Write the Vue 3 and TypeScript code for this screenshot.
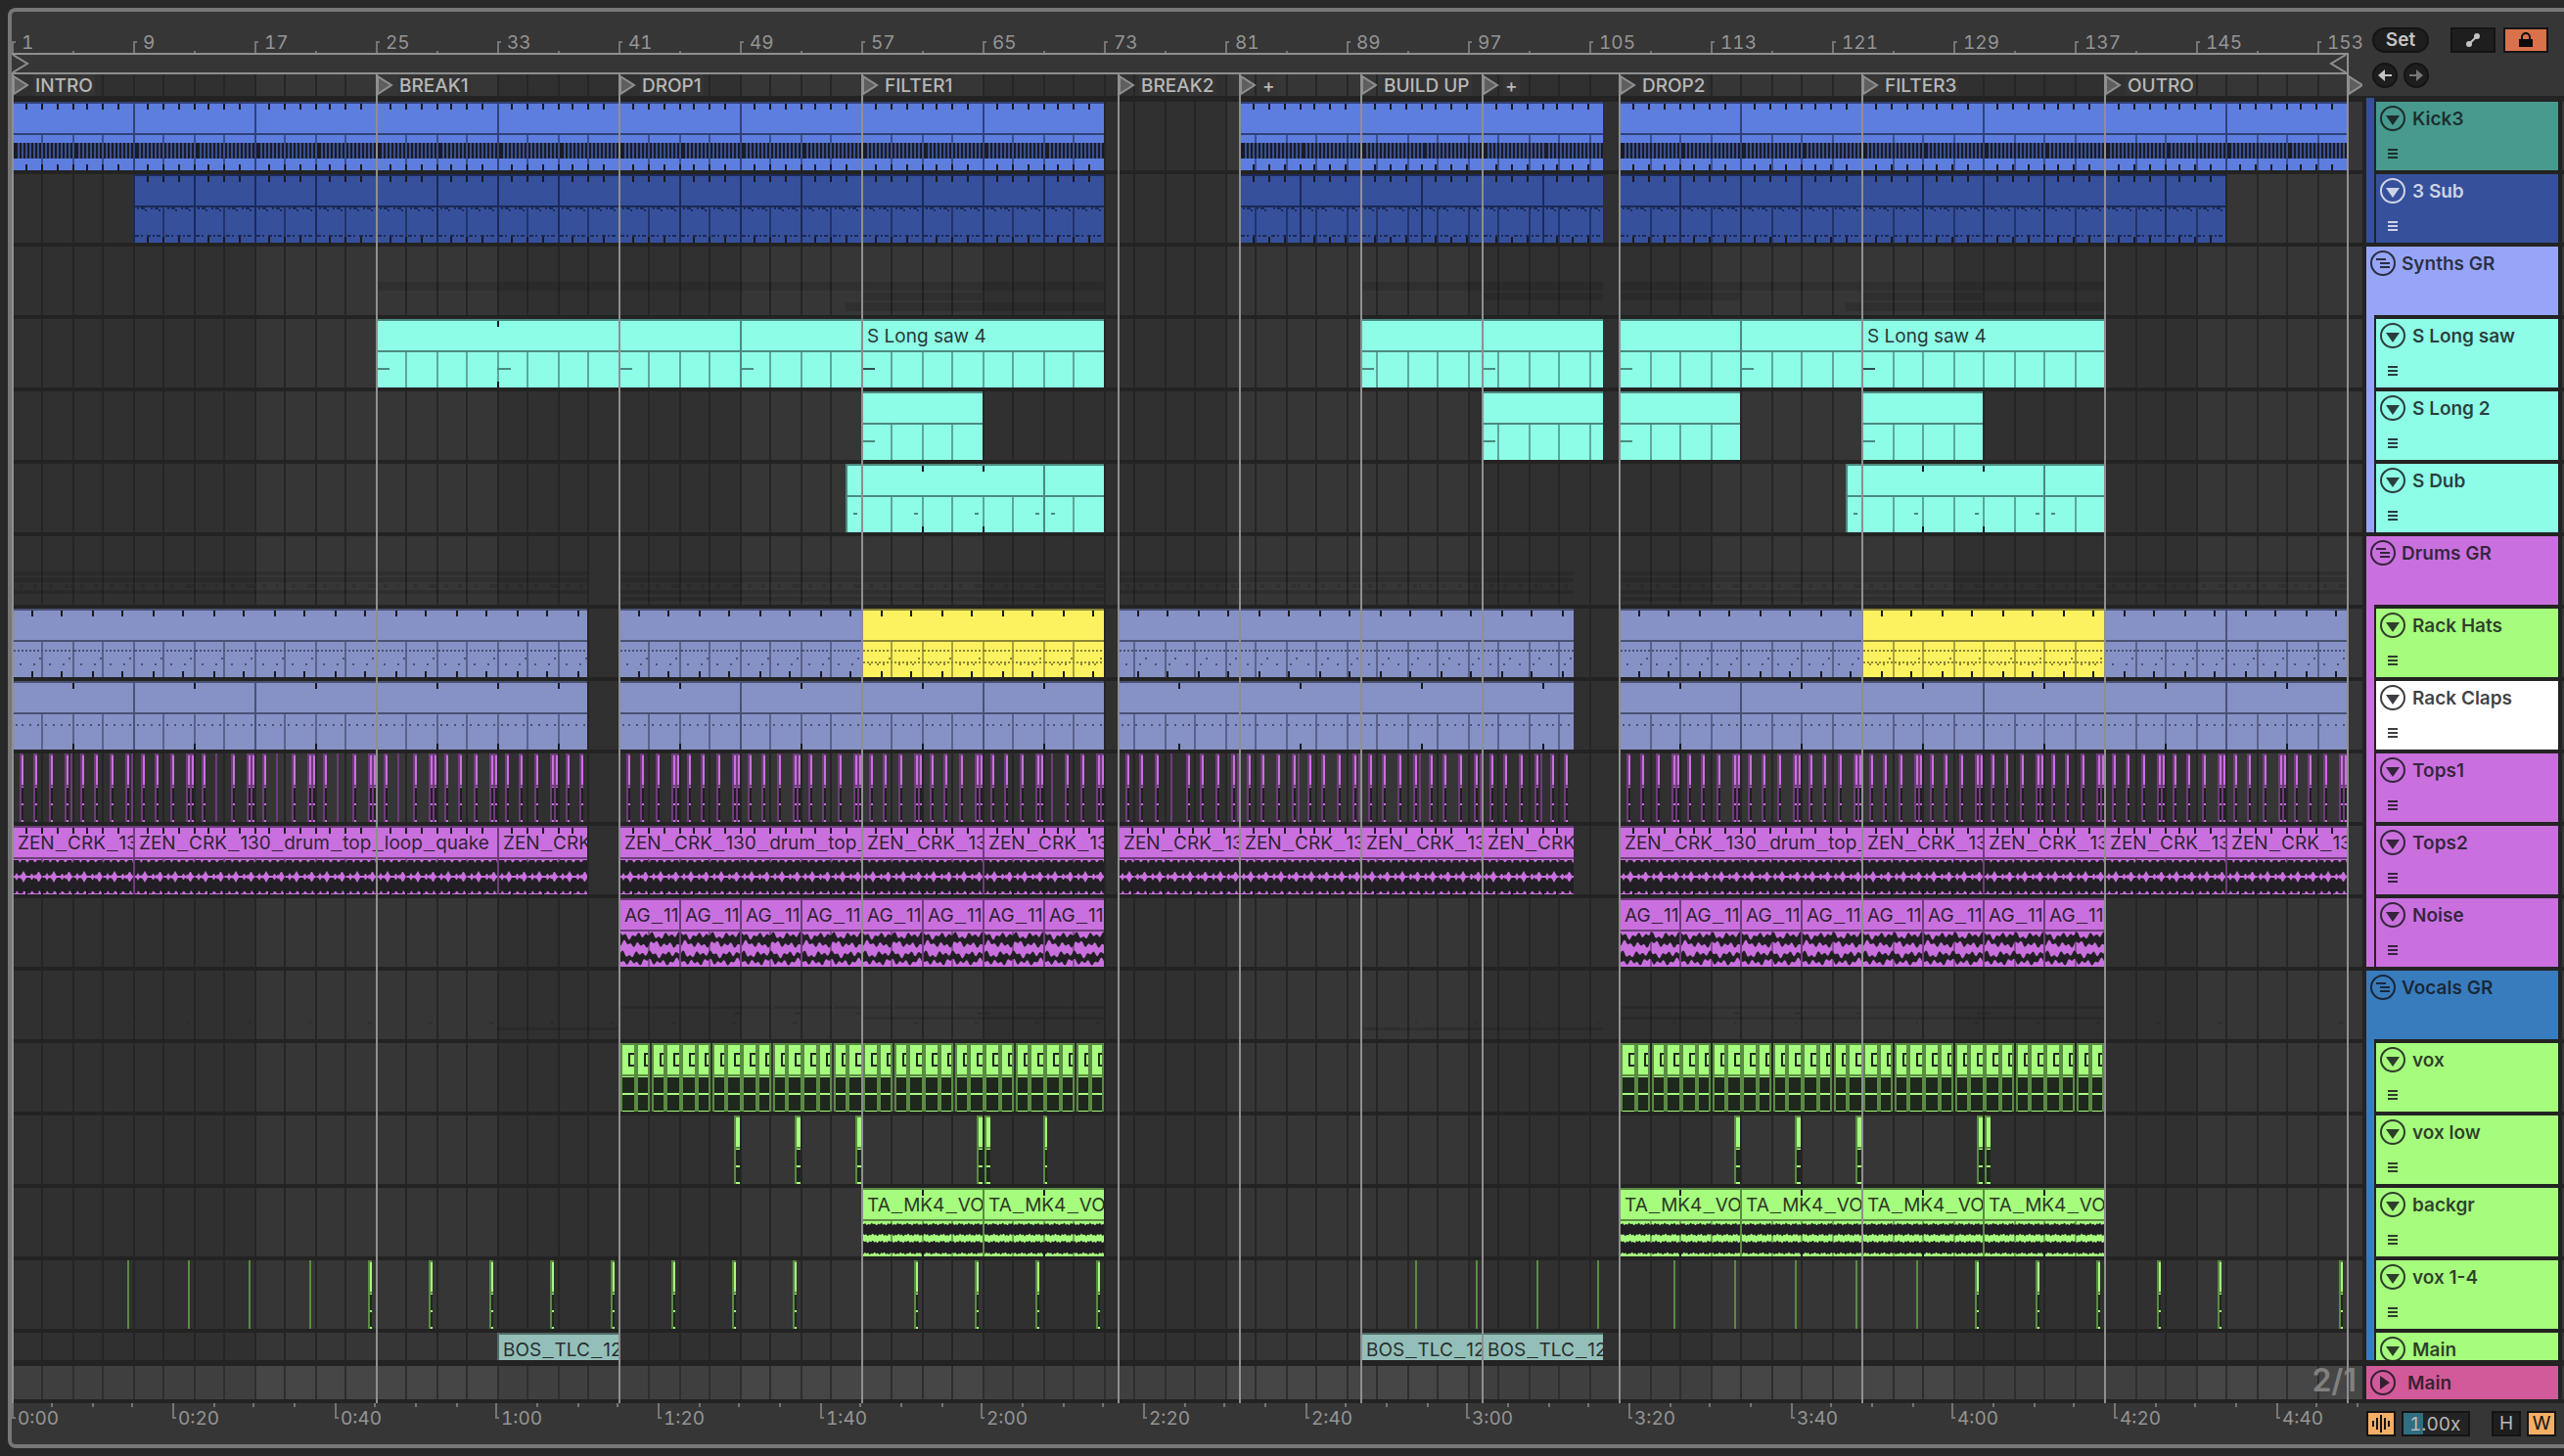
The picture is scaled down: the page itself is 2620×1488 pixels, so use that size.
<script setup lang="ts">
type ClipKind = 'kick' | 'sub' | 'pad' | 'dub' | 'hats' | 'hatsFull' | 'claps' | 'drum' | 'noise' | 'vocal' | 'title'
type Section = 'A' | 'B' | 'C'

interface Clip {
  x: number
  w: number
  fill: string
  edge: string
  label: string
  ticks: string
  grid: string
  notes: string
  wave: string
  stripe: string
  strongNote: boolean
}

interface Track {
  name: string
  color: string
  kind: 'track' | 'group'
  stripe: string
  light?: boolean
  short?: boolean
  clips: Clip[]
  ghosts: string
  sliver?: { bright: string; edge: string; wave: string; ink: string; fill: string; dark: string }
}

const BAR = 15.5
const H = 70
const origin: Record<Section, number> = { A: 0, B: 1130, C: 1642 }

const even = (v: number): number => 2 * Math.floor(v / 2)
const at = (s: Section, bars: number): number => even(origin[s] + bars * BAR)
const rect = (x: number, y: number, w: number, h: number): string => `M${x} ${y}h${w}v${h}h${-w}z`
const range = (n: number): number[] => Array.from({ length: n }, (_, i) => i)

/* file names are split so that the underscores can take a wider face */
const pieces = (label: string): string[] => label.split(/(_)/)

/* background grid: one line every two bars, shading flips every sixteen */
const gridPath = range(78).map(i => rect(even(31 * i), 0, 2, 90)).join('')
const shadePath = [248, 744, 1240, 1736, 2232].map(x => rect(x, 0, 248, 90)).join('')

function band(x: number, w: number, top: (t: number) => number, bottom: (t: number) => number): string {
  const up: string[] = []
  const down: string[] = []
  for (let t = 0; t <= w; t += 1) {
    up.push(`${x + t} ${top(t).toFixed(1)}`)
    down.unshift(`${x + t} ${bottom(t).toFixed(1)}`)
  }
  return `M${up.join('L')}L${down.join('L')}z`
}

const notch = (t: number): number => {
  const p = t % 7.75
  return p < 2 ? 3 - p : p > 7 ? 2 : 0
}
const spike = (t: number): number => {
  const p = t % BAR
  const near = (c: number, h: number): number => Math.max(0, h - Math.abs(p - c) * 1.8)
  return Math.max(near(5, 3), near(12, 5), near(8.5, 1.5))
}
const rough = (t: number): number =>
  Math.sin(t * 0.42) * 1.7 + Math.sin(t * 0.93 + 1) * 1.7 + Math.sin(t * 0.21 + 2) * 1.2
const fuzz = (t: number): number => Math.sin(t * 1.9) * 0.8 + Math.sin(t * 0.7) * 0.6

function waveFor(kind: ClipKind, x: number, w: number): string {
  if (kind === 'drum') {
    return (
      band(x, w, t => 35 + notch(t), t => 51 - spike(t)) +
      band(x, w, t => 53 + spike(t), t => 69 - notch(t + 3))
    )
  }
  if (kind === 'noise') {
    return (
      band(x, w, t => 42 - 4 - rough(t), t => 43 + 4 + rough(t + 5)) +
      band(x, w, t => 61 - 4 - rough(t + 30), t => 61 + 4 + rough(t + 12))
    )
  }
  if (kind === 'vocal') {
    return (
      band(x, w, t => 37 - fuzz(t), t => 48 + fuzz(t + 4)) +
      band(x, w, t => 55 - fuzz(t + 9), t => 67 + fuzz(t + 2))
    )
  }
  return ''
}

function notesFor(kind: ClipKind, x: number, w: number, noteEvery: number): string {
  const out: string[] = []
  if (kind === 'kick') {
    for (let i = 0; i * 3.875 < w; i++) out.push(rect(x + even(i * 3.875) + 2, 42, 2, 16))
  } else if (kind === 'sub') {
    for (let o = 0; o < w; o += 31) {
      for (const d of [4, 8, 10, 18, 22, 24]) out.push(rect(x + o + d, 34, 2, 2))
      for (const d of [12, 26]) out.push(rect(x + o + d, 36, 2, 2))
      for (const [d, n] of [[2, 4], [8, 2], [14, 4], [20, 2], [24, 4]]) out.push(rect(x + o + d, 62, n, 2))
    }
  } else if (kind === 'pad') {
    for (let o = 0; o < w && noteEvery > 0; o += noteEvery * BAR) out.push(rect(x + o, 50, 14, 2))
  } else if (kind === 'dub') {
    for (let o = 8; o < w; o += 62) out.push(rect(x + o, 50, 4, 2))
  } else if (kind === 'hats' || kind === 'hatsFull') {
    for (let i = 0; i * 3.875 < w; i++) {
      const n = x + even(i * 3.875)
      out.push(rect(n, 42, 2, 2))
      if (kind === 'hatsFull') out.push(rect(n, 54, 2, 2))
    }
    for (let o = 0; o < w; o += 31) {
      const b = x + even(o)
      out.push(rect(b + 28, 50, 2, 2), rect(b + 8, 56, 2, 2), rect(b + 22, 56, 2, 2))
      if (kind === 'hatsFull') out.push(rect(b + 16, 56, 2, 2))
    }
  } else if (kind === 'claps') {
    for (let o = 4; o < w; o += 7.75) out.push(rect(x + even(o), 44, 2, 2))
  }
  return out.join('')
}

interface Look { fill: string; edge: string; kind: ClipKind; tick: number; tickFrom?: number; noteEvery?: number }

function clip(look: Look, s: Section, a: number, b: number, label = '', strongNote = false): Clip {
  const x = at(s, a)
  const w = at(s, b) - x
  const ticks: string[] = []
  if (look.tick > 0) {
    for (let t = a + (look.tickFrom ?? look.tick); t < b - 0.2; t += look.tick) {
      ticks.push(rect(at(s, t), 2, 2, 6), rect(at(s, t), 64, 2, 6))
    }
  }
  const grid = range(78).map(i => even(31 * i)).filter(g => g > x && g < x + w).map(g => rect(g, 34, 2, 36)).join('')
  return {
    x, w, label, strongNote, grid,
    fill: look.fill,
    edge: look.edge,
    ticks: ticks.join(''),
    notes: notesFor(look.kind, x, w, look.noteEvery ?? 0),
    wave: waveFor(look.kind, x, w),
    stripe: look.kind === 'kick' ? rect(x, 42, w, 16) : ''
  }
}

const split = (look: Look, s: Section, a: number, b: number, step: number, label = ''): Clip[] => {
  const out: Clip[] = []
  for (let t = a; t < b; t += step) out.push(clip(look, s, t, Math.min(t + step, b), label))
  return out
}

const kick: Look = { fill: '#5d7ede', edge: '#304279', kind: 'kick', tick: 1 }
const sub: Look = { fill: '#36509b', edge: '#1c2a57', kind: 'sub', tick: 1 }
const pad: Look = { fill: '#8efde7', edge: '#4b8a7f', kind: 'pad', tick: 0, noteEvery: 99 }
const padTick: Look = { ...pad, tick: 8, noteEvery: 8 }
const dub: Look = { ...pad, kind: 'dub' }
const hats: Look = { fill: '#8692c6', edge: '#4a5274', kind: 'hats', tick: 2, tickFrom: 1.3 }
const hatsFull: Look = { fill: '#fcf25f', edge: '#8c8535', kind: 'hatsFull', tick: 2, tickFrom: 1.3 }
const claps: Look = { fill: '#8692c6', edge: '#4a5274', kind: 'claps', tick: 4 }
const tops: Look = { fill: '#c970de', edge: '#6f3c7b', kind: 'drum', tick: 1 }
const noise: Look = { fill: '#c970de', edge: '#6f3c7b', kind: 'noise', tick: 0 }
const back: Look = { fill: '#a6fc7d', edge: '#5a8b43', kind: 'vocal', tick: 4 }
const stem: Look = { fill: '#94bfb9', edge: '#506b67', kind: 'title', tick: 0 }

const LOOP = 'ZEN_CRK_130_drum_top_loop_quake'

/* thin audio snippets, drawn together as one shape per colour */
function slivers(items: [number, number][], fill: string, edge: string, ink: string): Track['sliver'] {
  let bright = ''
  let dark = ''
  let wave = ''
  for (const [x, w] of items) {
    dark += rect(x, 0, w, w > 2 ? 2 : H) + (w > 2 ? rect(x, 0, 2, H) + rect(x, 32, w, 2) : '')
    if (w > 2) {
      bright += rect(x + 2, 2, w - 2, 30) + rect(x + 2, 34, w - 2, 36)
      wave += rect(x + 2, 35, w - 2, 16) + rect(x + 2, 53, w - 2, 15)
    }
  }
  return { bright, edge, wave, ink, fill, dark }
}

function percussion(): [number, number][] {
  const out: [number, number][] = []
  const write = (s: Section, from: number, code: string): void => {
    code.split('').forEach((c, i) => {
      const x = at(s, from + i) + 8
      if (c === 'n' || c === 'x') out.push([x, 4])
      if (c === 'x') out.push([x + 6, 2])
      if (c === 't') out.push([x, 2])
      if (c === 'd') out.push([x, 4], [x + 4, 4])
    })
  }
  write('A', 0, 'nnnxnnnxnnndntndntndntndntndnnndnnndnn')
  write('A', 40, 'nnnd'.repeat(7) + 'tnnd')
  write('B', 0, 'nnnt' + 'nnnx'.repeat(6) + 'nn')
  write('C', 0, 'nnnd'.repeat(12))
  return out
}

function voxBlocks(): [number, number][] {
  const out: [number, number][] = []
  for (const base of [622, 1644]) {
    for (const g of range(8)) {
      for (const [o, w] of [[0, 16], [16, 14], [32, 14], [46, g === 7 ? 14 : 16]]) out.push([base + g * 62 + o, w])
    }
  }
  return out
}
const voxItems = voxBlocks()
const vox = {
  dark: voxItems.map(([x, w]) => rect(x, 0, w, H)).join(''),
  bright: voxItems.map(([x, w]) => rect(x + 2, 2, w - 4, 30) + rect(x + 2, 34, w - 4, 36)).join(''),
  wave: voxItems.map(([x, w]) => rect(x + 2, 35, w - 4, 16) + rect(x + 2, 53, w - 4, 16)).join('') +
    voxItems.map(([x, w]) => rect(x + 8, 10, 2, 14) + rect(x + 8, 10, w - 10, 2) + rect(x + 8, 22, w - 10, 2)).join(''),
  fill: '#a6fc7d', edge: '#5a8b43', ink: '#1f281c'
}

const voxLow: [number, number][] = [
  [738, 6], [800, 6], [862, 6], [986, 6], [994, 6], [1054, 4],
  [1760, 6], [1822, 6], [1884, 6], [2008, 6], [2016, 6]
]
const voxShort: [number, number][] = [
  ...[118, 180, 242, 304, 1434, 1496, 1558, 1620, 1698, 1760, 1822, 1884, 1946].map((x): [number, number] => [x, 2]),
  ...[364, 426, 488, 550, 612, 674, 736, 798, 922, 984, 1046, 1108, 2006, 2068, 2130, 2192, 2254, 2378]
    .map((x): [number, number] => [x, 4])
]

const spans = (list: [Section, number, number][], y: number, h: number): string =>
  list.map(([s, a, b]) => rect(at(s, a), y, at(s, b) - at(s, a), h)).join('')

const sawSpan: [Section, number, number][] = [['A', 24, 72], ['B', 16, 32], ['C', 0, 32]]
const longSpan: [Section, number, number][] = [['A', 56, 64], ['B', 24, 32], ['C', 0, 8], ['C', 16, 24]]
const dubSpan: [Section, number, number][] = [['A', 55, 72], ['C', 15, 32]]
const drumSpan: [Section, number, number][] = [['A', 0, 38], ['A', 40, 72], ['B', 0, 30.1], ['C', 0, 48]]
const dropSpan: [Section, number, number][] = [['A', 40, 72], ['C', 0, 32]]

const synthGhosts = spans(sawSpan, 36, 9) + spans(longSpan, 47, 8) + spans(dubSpan, 57, 9)
const drumGhosts = spans(drumSpan, 36, 4) + spans(drumSpan, 42, 5) + spans(drumSpan, 55, 4) +
  spans(dropSpan, 62, 4) + percussion().map(([x, w]) => rect(x, 49, w, 4)).join('')
const vocalGhosts = voxItems.map(([x, w]) => rect(x, 36, w, 3)).join('') +
  voxLow.map(([x, w]) => rect(x, 42, w, 3)).join('') +
  spans([['A', 56, 72], ['C', 0, 32]], 47, 3) +
  voxShort.map(([x, w]) => rect(x, 52, w, 3)).join('') +
  spans([['A', 32, 40], ['B', 16, 32]], 58, 3)

const mk = (name: string, color: string, stripe: string, clips: Clip[], extra: Partial<Track> = {}): Track =>
  ({ name, color, stripe, clips, kind: 'track', ghosts: '', ...extra })

const GREEN = '#a6fc7d'
const PURPLE = '#c970de'
const AQUA = '#8efde7'
const VIOLET = '#96a5f8'
const BLUE = '#387cbd'

const tracks: Track[] = [
  mk('Kick3', '#479a8d', '#36509b', [
    ...split(kick, 'A', 0, 72, 8), ...split(kick, 'B', 8, 32, 8), ...split(kick, 'C', 0, 48, 8)]),
  mk('3 Sub', '#36509b', '#36509b', [
    ...split(sub, 'A', 8, 72, 4), ...split(sub, 'B', 8, 32, 4), ...split(sub, 'C', 0, 40, 4)], { light: true }),
  mk('Synths GR', VIOLET, '', [], { kind: 'group', ghosts: synthGhosts }),
  mk('S Long saw', AQUA, VIOLET, [
    clip(padTick, 'A', 24, 40), clip(pad, 'A', 40, 48), clip(pad, 'A', 48, 56),
    clip(pad, 'A', 56, 72, 'S Long saw 4', true),
    ...split(pad, 'B', 16, 32, 8), ...split(pad, 'C', 0, 16, 8),
    clip(pad, 'C', 16, 32, 'S Long saw 4', true)]),
  mk('S Long 2', AQUA, VIOLET, [
    clip(pad, 'A', 56, 64), clip(pad, 'B', 24, 32), clip(pad, 'C', 0, 8), clip(pad, 'C', 16, 24)]),
  mk('S Dub', AQUA, VIOLET, [
    clip({ ...dub, tick: 4, tickFrom: 5 }, 'A', 55, 68), clip({ ...dub }, 'A', 68, 72),
    clip({ ...dub, tick: 4, tickFrom: 5 }, 'C', 15, 28), clip(dub, 'C', 28, 32)]),
  mk('Drums GR', PURPLE, '', [], { kind: 'group', ghosts: drumGhosts }),
  mk('Rack Hats', GREEN, PURPLE, [
    clip(hats, 'A', 0, 38), clip(hats, 'A', 40, 56), clip(hatsFull, 'A', 56, 72), clip(hats, 'B', 0, 30.1),
    clip(hats, 'C', 0, 16), clip(hatsFull, 'C', 16, 32), ...split(hats, 'C', 32, 48, 8)]),
  mk('Rack Claps', '#ffffff', PURPLE, [
    ...split(claps, 'A', 0, 24, 8), clip(claps, 'A', 24, 38), ...split(claps, 'A', 40, 72, 8),
    ...split(claps, 'B', 0, 30.1, 8), ...split(claps, 'C', 0, 48, 8)]),
  mk('Tops1', PURPLE, PURPLE, [], { sliver: slivers(percussion(), PURPLE, '#6f3c7b', '#221d24') }),
  mk('Tops2', PURPLE, PURPLE, [
    clip(tops, 'A', 0, 8, LOOP), clip(tops, 'A', 8, 32, LOOP), clip(tops, 'A', 32, 38, LOOP),
    clip(tops, 'A', 40, 56, LOOP), ...split(tops, 'A', 56, 72, 8, LOOP),
    ...split(tops, 'B', 0, 30.1, 8, LOOP),
    clip(tops, 'C', 0, 16, LOOP), ...split(tops, 'C', 16, 48, 8, LOOP)]),
  mk('Noise', PURPLE, PURPLE, [
    ...split(noise, 'A', 40, 72, 4, 'AG_112'), ...split(noise, 'C', 0, 32, 4, 'AG_112')]),
  mk('Vocals GR', BLUE, '', [], { kind: 'group', ghosts: vocalGhosts }),
  mk('vox', GREEN, BLUE, [], { sliver: vox }),
  mk('vox low', GREEN, BLUE, [], { sliver: slivers(voxLow, GREEN, '#5a8b43', '#1f281c') }),
  mk('backgr', GREEN, BLUE, [
    ...split(back, 'A', 56, 72, 8, 'TA_MK4_VO'), ...split(back, 'C', 0, 32, 8, 'TA_MK4_VO')]),
  mk('vox 1-4', GREEN, BLUE, [], { sliver: slivers(voxShort, GREEN, '#5a8b43', '#1f281c') }),
  mk('Main', GREEN, BLUE, [
    clip(stem, 'A', 32, 40, 'BOS_TLC_12'), ...split(stem, 'B', 16, 32, 8, 'BOS_TLC_12')], { short: true })
]

const locators = [
  { x: 0, name: 'INTRO' },
  { x: at('A', 24), name: 'BREAK1' },
  { x: at('A', 40), name: 'DROP1' },
  { x: at('A', 56), name: 'FILTER1' },
  { x: at('B', 0), name: 'BREAK2' },
  { x: at('B', 8), name: '+' },
  { x: at('B', 16), name: 'BUILD UP' },
  { x: at('B', 24), name: '+' },
  { x: at('C', 0), name: 'DROP2' },
  { x: at('C', 16), name: 'FILTER3' },
  { x: at('C', 32), name: 'OUTRO' },
  { x: at('C', 48), name: '' }
]

const barMarks = range(20).map(i => ({ x: even(124 * i), text: String(1 + 8 * i) }))
const barTicks = barMarks.map(m => rect(m.x, 30, 2, 12) + rect(m.x, 30, 4, 2) + (m.x < 2300 ? rect(m.x + 62, 40, 2, 2) : '')).join('')

const SECONDS20 = 165.33
const timeMarks = range(15).map(i => ({
  x: even(SECONDS20 * i),
  text: `${Math.floor(i / 3)}:${['00', '20', '40'][i % 3]}`
}))
const timeTicks = timeMarks.map(m => rect(m.x, 0, 2, 16) + rect(m.x, 14, 4, 2)).join('') +
  range(59).filter(i => i % 4).map(i => rect(even((SECONDS20 / 4) * i), 0, 2, 4)).join('')
</script>

<template>
  <main class="app">
    <section class="frame">
      <div class="top">
        <div class="rulers">
          <div class="bar-ruler">
            <svg class="layer" aria-hidden="true"><path :d="barTicks" fill="#757575" /></svg>
            <span v-for="m in barMarks" :key="m.text" class="bar-label" :style="{ left: m.x + 'px' }">{{ m.text }}</span>
          </div>
          <div class="loop">
            <svg width="18" height="18" viewBox="0 0 18 18" aria-hidden="true"><path d="M1 0L16 9L1 18" /></svg>
            <svg width="18" height="18" viewBox="0 0 18 18" aria-hidden="true"><path d="M17 0L2 9L17 18" /></svg>
          </div>
          <div class="locator-lane">
            <svg class="layer" aria-hidden="true">
              <path :d="shadePath" fill="#363636" /><path :d="gridPath" fill="#262626" />
            </svg>
            <a v-for="l in locators" :key="l.x" href="#" class="locator" :aria-label="l.name || 'End'" :style="{ left: l.x + 'px' }">
              <svg width="16" height="22" viewBox="0 0 16 22" aria-hidden="true"><path d="M0 2L14 11L0 20z" /></svg>
              <span v-if="l.name">{{ l.name }}</span>
            </a>
          </div>
        </div>
        <div class="controls">
          <div class="controls-row">
            <button class="pill">Set</button>
            <button class="box first" aria-label="Automation mode">
              <svg width="16" height="16" viewBox="0 0 16 16" aria-hidden="true">
                <path d="M4 12L12 4" stroke="#c4c4c4" stroke-width="2" />
                <circle cx="4" cy="12" r="3" fill="#c4c4c4" /><circle cx="12" cy="4" r="3" fill="#c4c4c4" />
              </svg>
            </button>
            <button class="box lock" aria-label="Lock envelopes">
              <svg width="16" height="16" viewBox="0 0 16 16" aria-hidden="true">
                <path d="M4 8V5a4 4 0 0 1 8 0v3" fill="none" stroke="#0b0b0b" stroke-width="2" />
                <path d="M1 7h14v8h-14z" fill="#0b0b0b" />
              </svg>
            </button>
          </div>
          <div class="controls-row">
            <button class="round" aria-label="Previous locator">
              <svg width="16" height="16" viewBox="0 0 16 16" aria-hidden="true"><path d="M1 8L8 2V7H15V9H8V14z" fill="#c4c4c4" /></svg>
            </button>
            <button class="round" aria-label="Next locator">
              <svg width="16" height="16" viewBox="0 0 16 16" aria-hidden="true"><path d="M15 8L8 2V7H1V9H8V14z" fill="#767676" /></svg>
            </button>
          </div>
        </div>
      </div>

      <div class="stage">
        <div v-for="t in tracks" :key="t.name + t.stripe" class="row" :class="{ short: t.short }">
          <div class="lane">
            <svg class="layer" aria-hidden="true">
              <path :d="shadePath" fill="#363636" /><path :d="gridPath" fill="#252525" />
              <path v-if="t.ghosts" :d="t.ghosts" fill="#000000" fill-opacity="0.12" />
              <template v-if="t.sliver">
                <path :d="t.sliver.dark" :fill="t.sliver.edge" />
                <path :d="t.sliver.bright" :fill="t.sliver.fill" />
                <path :d="t.sliver.wave" :fill="t.sliver.ink" />
              </template>
            </svg>
            <div v-for="c in t.clips" :key="c.x" class="clip"
              :style="{ left: c.x + 'px', width: c.w + 'px', '--fill': c.fill, '--edge': c.edge }">
              <svg v-if="!t.short" :width="c.w" height="70" :viewBox="`${c.x} 0 ${c.w} 70`" aria-hidden="true">
                <path :d="c.grid" :fill="c.edge" fill-opacity="0.75" />
                <path :d="`M${c.x} 32h${c.w}v2h${-c.w}z`" :fill="c.edge" />
                <path v-if="c.stripe" :d="c.stripe" fill="#3a4f8e" />
                <path v-if="c.notes" :d="c.notes" :fill="c.stripe ? '#191c27' : c.edge" :class="{ strong: c.strongNote }" />
                <path v-if="c.wave" :d="c.wave" fill="#221f24" />
                <path :d="c.ticks" fill="#191a20" />
                <path :d="`M${c.x} 0h${c.w}v2h${-c.w}zM${c.x} 0h2v70h-2z`" :fill="c.edge" />
              </svg>
              <p v-if="c.label"><span v-for="(p, i) in pieces(c.label)" :key="i" :class="{ under: p === '_' }">{{ p }}</span></p>
            </div>
          </div>
          <div class="head" :class="[t.kind, { light: t.light }]">
            <i v-if="t.stripe" class="stripe" :style="{ background: t.stripe }"></i>
            <div class="plate" :style="{ background: t.color }">
              <button class="fold" :aria-label="'Fold ' + t.name">
                <svg width="26" height="26" viewBox="0 0 26 26" aria-hidden="true">
                  <circle cx="13" cy="13" r="12" fill="none" stroke="currentColor" stroke-width="2" />
                  <path v-if="t.kind === 'group'" d="M6 8h10v2h-10zM10 12h10v2h-10zM10 16h10v2h-10z" fill="currentColor" />
                  <path v-else d="M6 10h14L13 20z" fill="currentColor" />
                </svg>
              </button>
              <span class="name">{{ t.name }}</span>
              <button v-if="t.kind === 'track' && !t.short" class="menu" :aria-label="'Automation of ' + t.name">
                <svg width="10" height="10" viewBox="0 0 10 10" aria-hidden="true">
                  <path d="M0 0h10v2h-10zM0 4h10v2h-10zM0 8h10v2h-10z" fill="currentColor" />
                </svg>
              </button>
            </div>
          </div>
          <i class="edge"></i>
        </div>

        <div class="row master">
          <div class="lane">
            <svg class="layer" aria-hidden="true">
              <path :d="shadePath" fill="#464646" /><path :d="gridPath" fill="#2e2e2e" />
            </svg>
            <span class="signature">2/1</span>
          </div>
          <div class="head group">
            <div class="plate pink">
              <button class="fold" aria-label="Unfold Main">
                <svg width="26" height="26" viewBox="0 0 26 26" aria-hidden="true">
                  <circle cx="13" cy="13" r="12" fill="none" stroke="currentColor" stroke-width="2" />
                  <path d="M10 6v14L20 13z" fill="currentColor" />
                </svg>
              </button>
              <span class="name">Main</span>
            </div>
          </div>
          <i class="edge"></i>
        </div>
        <i v-for="l in locators" :key="l.x" class="guide" :style="{ left: l.x + 'px' }"></i>
      </div>

      <div class="bottom">
        <div class="time-ruler">
          <svg class="layer" aria-hidden="true"><path :d="timeTicks" fill="#757575" /></svg>
          <span v-for="m in timeMarks" :key="m.text" class="time-label" :style="{ left: m.x + 'px' }">{{ m.text }}</span>
        </div>
        <div class="view">
          <button class="small on" aria-label="Waveform zoom">
            <svg width="20" height="20" viewBox="0 0 20 20" aria-hidden="true">
              <path d="M1 7h2v6h-2zM5 4h2v12h-2zM9 1h2v18h-2zM13 4h2v12h-2zM17 7h2v6h-2z" fill="#141414" />
            </svg>
          </button>
          <input class="zoom" type="text" value="1.00x" aria-label="Waveform vertical zoom" />
          <button class="small h">H</button>
          <button class="small on">W</button>
        </div>
      </div>
    </section>
  </main>
</template>

<style>
html, body { background: #282828; }
</style>

<style scoped>
.app {
  padding: 8px 0 8px 8px;
  font-family: "Inter", "Liberation Sans", sans-serif;
  font-size: 19px;
  line-height: 24px;
  color: #b8b8b8;
  overflow: hidden;
}
.app * { box-sizing: border-box; }
.frame {
  border: 4px solid #777777;
  border-right: 0;
  border-radius: 8px 0 0 8px;
  background: #363636;
  overflow: hidden;
}
button, input {
  margin: 0;
  padding: 0;
  border: 0;
  font: inherit;
  color: inherit;
  background: none;
}
svg { display: block; }
.layer {
  position: absolute;
  inset: 0;
  width: 100%;
  height: 100%;
}

.top { display: flex; }
.rulers { flex: 1; min-width: 0; }
.bar-ruler, .time-ruler, .zoom { font-variant-numeric: tabular-nums; }
.bar-ruler { position: relative; height: 42px; }
.bar-label {
  position: absolute;
  top: 20px;
  padding-left: 10px;
  color: #949494;
}
.loop {
  display: flex;
  justify-content: space-between;
  width: 2388px;
  height: 22px;
  border: 2px solid #8f8f8f;
  border-left: 0;
}
.loop path { fill: none; stroke: #8f8f8f; stroke-width: 2; }
.locator-lane {
  position: relative;
  height: 22px;
  margin-right: 4px;
  background: #303030;
  overflow: hidden;
}
.locator {
  position: absolute;
  top: 0;
  display: flex;
  align-items: flex-start;
  height: 22px;
  border-left: 2px solid #8f8f8f;
  color: #b8b8b8;
  font-weight: 500;
  text-decoration: none;
}
.locator path { fill: #5e5e5e; stroke: #8f8f8f; stroke-width: 2; }
.locator span {
  margin-left: 4px;
  padding: 0 2px;
  background: #343434;
}
.controls {
  display: flex;
  flex-direction: column;
  gap: 10px;
  width: 202px;
  padding: 16px 0 0 6px;
}
.controls-row { display: flex; gap: 6px; }
.pill, .round, .box, .small {
  display: flex;
  align-items: center;
  justify-content: center;
  height: 26px;
  border: 2px solid #141414;
  background: #1e1e1e;
}
.pill {
  width: 58px;
  border-radius: 13px;
  color: #c4c4c4;
  font-weight: 600;
}
.round { width: 26px; border-radius: 13px; }
.box { width: 46px; }
.first { margin-left: 16px; margin-right: 2px; }
.lock { background: #d9714c; }

.stage {
  position: relative;
  display: flex;
  flex-direction: column;
  gap: 4px;
  padding: 6px 0 4px;
  background: #232323;
}
.row {
  display: grid;
  grid-template-columns: minmax(0, 1fr) 196px 2px;
  grid-template-rows: 100%;
  gap: 4px;
  height: 70px;
}
.row.short { height: 28px; }
.row.master { height: 34px; margin-top: 2px; }
.lane {
  position: relative;
  background: #303030;
  overflow: hidden;
}
.master .lane { background: #3f3f3f; }
.edge { background: #363636; }
.clip {
  position: absolute;
  top: 0;
  height: 100%;
  background: var(--fill);
  overflow: hidden;
  white-space: nowrap;
}
.short .clip { border-top: 2px solid var(--edge); border-left: 2px solid var(--edge); }
.clip svg { position: absolute; inset: 0; }
.clip p {
  position: relative;
  margin: 0;
  padding: 6px 0 0 6px;
  overflow: hidden;
  color: #141414;
  opacity: 0.85;
}
.short .clip p { padding: 4px 0 0 4px; }
.under {
  font-family: "Liberation Mono", monospace;
  padding: 0 1px;
}
.strong { fill: #2f5049; }
.head {
  display: flex;
  min-width: 0;
  min-height: 0;
  color: rgba(20, 20, 24, 0.82);
}
.head.light { color: rgba(255, 255, 255, 0.76); }
.stripe {
  width: 8px;
  margin: -4px 2px 0 0;
}
.plate {
  flex: 1;
  display: grid;
  grid-template-columns: 26px 1fr;
  grid-template-rows: 26px 10px;
  column-gap: 7px;
  row-gap: 18px;
  min-height: 0;
  padding: 4px 0 0 4px;
  overflow: hidden;
}
.group .plate { column-gap: 6px; }
.pink { background: #d25a9a; }
.master .group .plate { column-gap: 12px; }
.name { padding-top: 2px; font-weight: 600; }
.menu { padding-left: 8px; justify-self: start; }
.signature {
  position: absolute;
  right: 6px;
  top: 0;
  font-size: 32px;
  line-height: 30px;
  font-weight: 600;
  color: #808080;
}
.guide {
  position: absolute;
  top: 0;
  bottom: 0;
  width: 2px;
  background: #8f8f8f;
}

.bottom { display: flex; height: 42px; }
.time-ruler {
  position: relative;
  flex: 1;
  min-width: 0;
  overflow: hidden;
}
.time-label {
  position: absolute;
  top: 4px;
  padding-left: 6px;
  color: #949494;
}
.view {
  display: flex;
  gap: 6px;
  width: 202px;
  padding-top: 8px;
}
.small { width: 30px; }
.small.on { background: #f4ae66; color: #141414; }
.small.h { margin-left: 16px; color: #b8b8b8; }
.zoom {
  width: 70px;
  height: 26px;
  padding-left: 6px;
  border: 2px solid #141414;
  color: #b8b8b8;
  background: linear-gradient(90deg, #2f6e80 20px, #232323 20px);
}
</style>
